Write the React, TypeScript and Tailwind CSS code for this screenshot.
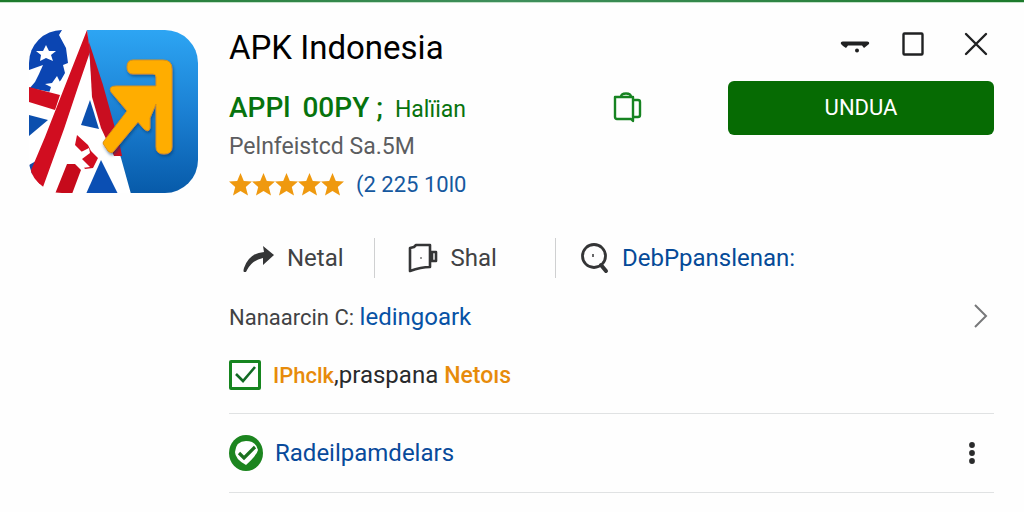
import type { ReactNode } from 'react';

const stars = [1, 2, 3, 4, 5];

function AppLogo() {
  return (
    <svg viewBox="0 0 170 164" className="h-[164px] w-[170px] shrink-0" role="img" aria-label="APK Indonesia">
      <defs>
        <linearGradient id="sky" x1="0" y1="0" x2="0" y2="1">
          <stop offset="0" stopColor="#2da5f3" />
          <stop offset="0.5" stopColor="#1b80d3" />
          <stop offset="1" stopColor="#075aa9" />
        </linearGradient>
        <clipPath id="tile">
          <rect width="169" height="163" rx="33" />
        </clipPath>
        <filter id="arrowShadow" x="-20%" y="-20%" width="140%" height="140%">
          <feDropShadow dx="1" dy="2" stdDeviation="1.5" floodColor="#063a70" floodOpacity="0.6" />
        </filter>
      </defs>
      <g clipPath="url(#tile)">
        <rect width="170" height="164" fill="#fff" />
        <path d="M58 0H170V164H102L92 128L62 42Z" fill="url(#sky)" />
        <path d="M0 0H33L30 5L37 18L39 33L34 35L36 43L32 50L22 62L0 58Z" fill="#0b45b2" />
        <path d="M0 40L14 35L10 44L6 52L0 59Z" fill="#fff" />
        <path d="M17 15L20 21L27 21L22 25L24 31L17 28L11 31L12 25L7 21L14 21Z" fill="#fff" />
        <path d="M28 46L31 52L37 53L32 57L34 64L27 60L20 63L22 57L16 54L23 53Z" fill="#fff" />
        <path d="M0 57L31 65L26 80L0 72Z" fill="#d10d20" />
        <path d="M0 85L19 90L0 106Z" fill="#0b4fae" />
        <path d="M0 135L7 131L3 146L0 144Z" fill="#164aa6" />
        <path d="M58 0L61 22L49 57L35 99L14 157L0 145L16 107L34 61Z" fill="#d10d20" />
        <path d="M60 12L74 55L91 116L93 126L85 126L72 98L63 67Z" fill="#c90e20" />
        <path d="M61 70L70 99L52 95Z" fill="#0b4fae" />
        <path d="M48 105L59 115L62 121L69 128L64 138L56 139L50 130L53 122L46 115Z" fill="#d10d20" />
        <path d="M46 125L60 118L61 123L53 129L61 137L53 138L51 143L46 138Z" fill="#fff" />
        <path d="M38 134H46L52 140L43 164H26Z" fill="#c60a1b" />
        <path d="M72 130L89 164H57Z" fill="#0b4fb3" />
        <path
          d="M104 30H134Q143 30 143 39V117Q143 124 135 124Q127 124 127 117V74L121 88V98Q120 103 115 99L109 92L84 122Q82 124 79 121L75 115Q73 113 75 111L98 81L82 62Q79 56 87 56H127V47Q127 44 124 44H104Q98 44 98 37T104 30Z"
          fill="#ffad05"
          stroke="#d99112"
          filter="url(#arrowShadow)"
        />
      </g>
    </svg>
  );
}

function WindowControls() {
  return (
    <div className="flex h-7 items-center gap-8 self-start text-[#202122]">
      <button type="button" aria-label="Minimize">
        <svg viewBox="0 0 30 24" className="h-6 w-[30px]" fill="currentColor">
          <path d="M1 12Q0 9 4 9.5H26Q30 9 29 12L24 16L22 13.5H8L6 16L3 14Z" />
          <circle cx="17" cy="18.5" r="2" />
        </svg>
      </button>
      <div className="flex items-center gap-[38px]">
        <button type="button" aria-label="Maximize">
          <svg viewBox="0 0 24 24" className="size-6" fill="none" stroke="currentColor" strokeWidth="2.4">
            <rect x="1.5" y="1.5" width="19" height="21" rx="1" />
          </svg>
        </button>
        <button type="button" aria-label="Close" className="mr-1.5">
          <svg viewBox="0 0 24 24" className="size-6" fill="none" stroke="currentColor" strokeWidth="2.4" strokeLinecap="round">
            <path d="M2 2L22 22M22 2L2 22" />
          </svg>
        </button>
      </div>
    </div>
  );
}

function CopyIcon() {
  return (
    <svg viewBox="0 0 30 32" className="h-8 w-[30px]" fill="none" stroke="#168321" strokeWidth="2.4" strokeLinejoin="round">
      <path d="M3 5H21V29L19 27H5Q3 27 3 25Z" />
      <path d="M9 5Q9 1.5 14 1.5T19 5" />
      <path d="M21 8H26Q28 8 28 10V23Q28 25 26 25H21" />
    </svg>
  );
}

function ShareArrow() {
  return (
    <svg viewBox="0 0 32 28" className="h-7 w-8" fill="#343536">
      <path d="M20 2L31 11L20 21V14Q9 16 4 26Q3 29 1 28Q0 27 1 24Q6 9 21 8Z" />
    </svg>
  );
}

function MugIcon() {
  return (
    <svg viewBox="0 0 32 32" className="size-8" fill="none" stroke="#343536" strokeWidth="2.6" strokeLinejoin="round">
      <path d="M3 6L7 5L9 3H23V25Q14 25 3 29Z" />
      <path d="M23 10H29V19H23M25 11V18" />
      <circle cx="14" cy="16" r="1" fill="#777" stroke="none" />
    </svg>
  );
}

function SearchIcon() {
  return (
    <svg viewBox="0 0 30 32" className="h-8 w-[30px]" fill="none" stroke="#343536">
      <circle cx="14" cy="14" r="11.5" strokeWidth="2.8" />
      <path d="M21 23L26 29" strokeWidth="4" strokeLinecap="round" />
      <path d="M13 12V15" strokeWidth="1.5" />
    </svg>
  );
}

function Action({ icon, label, className }: { icon: ReactNode; label: string; className: string }) {
  return (
    <button type="button" className={`flex h-10 items-center ${className}`}>
      {icon}
      {label}
    </button>
  );
}

export default function App() {
  return (
    <div className="min-h-screen bg-[#fefefe] font-[Roboto,sans-serif] text-2xl text-[#414244]">
      <div className="h-[3px] border-b border-[#c5e2ca] bg-linear-to-r from-[#1c7a2b] via-[#3f8f5c] to-[#1c7a2b]" />
      <main className="flex items-start gap-[30px] pt-[27px] pr-[30px] pl-[29px]">
        <AppLogo />
        <div className="min-w-0 flex-1">
          <header className="flex h-9 items-center justify-between">
            <h1 className="text-[33px] leading-9 text-black">APK Indonesia</h1>
            <WindowControls />
          </header>

          <div className="mt-[15px] flex h-[54px] items-center">
            <p className="flex flex-1 items-baseline gap-3 whitespace-nowrap text-[#07730d]">
              <span className="text-[28px] font-medium">APPl</span>
              <span className="text-[28px] font-medium">00PY ;</span>
              <span className="text-[23px]">Halïian</span>
            </p>
            <button type="button" aria-label="Copy" className="mr-[86px]">
              <CopyIcon />
            </button>
            <button type="button" className="h-[54px] w-[266px] rounded-md bg-[#066b03] text-[22px] text-white">
              UNDUA
            </button>
          </div>

          <p className="h-6 text-[23px] leading-6 text-[#5c5d60]">Pelnfeistcd Sa.5M</p>

          <div className="mt-3.5 flex h-6 items-center gap-3">
            <div className="flex" role="img" aria-label="5 stars">
              {stars.map((star) => (
                <svg key={star} viewBox="0 0 23 24" className="h-6 w-[23px]" fill="#ef990f">
                  <path d="M11.5 0L14.8 8L23 8.6L16.8 14L19 22.6L11.5 18L4 22.6L6.2 14L0 8.6L8.2 8Z" />
                </svg>
              ))}
            </div>
            <a href="#reviews" className="text-[22px] text-[#15589f]">(2 225 10l0</a>
          </div>

          <div className="mt-[41px] flex items-center">
            <Action icon={<ShareArrow />} label="Netal" className="ml-3.5 gap-3" />
            <span className="ml-[30px] h-10 w-px bg-[#cfd0d1]" />
            <Action icon={<MugIcon />} label="Shal" className="ml-8 gap-3" />
            <span className="ml-[58px] h-10 w-px bg-[#cfd0d1]" />
            <Action icon={<SearchIcon />} label="DebPpanslenan:" className="ml-6 gap-3 text-[#054a98]" />
          </div>

          <div className="mt-[23px] flex h-8 items-center justify-between">
            <p className="text-[22px]">
              Nanaarcin C: <a href="#developer" className="text-2xl text-[#0752a5]">ledingoark</a>
            </p>
            <button type="button" aria-label="Open details" className="mr-1.5">
              <svg viewBox="0 0 14 26" className="h-[26px] w-3.5" fill="none" stroke="#77787a" strokeWidth="2">
                <path d="M1 1L12 12L1 23" />
              </svg>
            </button>
          </div>

          <label className="mt-[26px] flex h-8 items-center gap-3">
            <span className="grid h-[30px] w-8 shrink-0">
              <input
                type="checkbox"
                defaultChecked
                className="peer col-start-1 row-start-1 appearance-none rounded-xs border-[3px] border-[#16851f]"
              />
              <svg
                viewBox="0 0 32 30"
                className="pointer-events-none invisible col-start-1 row-start-1 h-[30px] w-8 peer-checked:visible"
                fill="none"
                stroke="#126b24"
                strokeWidth="2.6"
              >
                <path d="M7 14L14 21L26 7" />
              </svg>
            </span>
            <span className="text-[#292a2c]">
              <span className="text-[22px] font-medium text-[#e78b0b]">IPhclk</span>,praspana{' '}
              <span className="text-[23px] font-medium text-[#e78b0b]">Netoıs</span>
            </span>
          </label>

          <div className="mt-[22px] flex h-20 items-center justify-between border-y border-[#e0e2e3]">
            <a href="#details" className="flex items-center gap-3 text-[#084a9b]">
              <svg viewBox="0 0 34 36" className="h-9 w-[34px]">
                <ellipse cx="17" cy="18" rx="17" ry="18" fill="#1c851f" />
                <path d="M17 6Q27 6 29 15Q28 20 17 30Q6 24 6 17Q7 6 17 6Z" fill="#fff" />
                <path d="M10 18L15 23L26 12" fill="none" stroke="#1c701f" strokeWidth="3.2" />
              </svg>
              Radeilpamdelars
            </a>
            <button type="button" aria-label="More options" className="mr-[18px]">
              <svg viewBox="0 0 8 24" className="h-6 w-2" fill="#2a2b2c">
                <circle cx="4" cy="4" r="2.9" />
                <circle cx="4" cy="12" r="2.9" />
                <circle cx="4" cy="20" r="2.9" />
              </svg>
            </button>
          </div>
        </div>
      </main>
    </div>
  );
}
